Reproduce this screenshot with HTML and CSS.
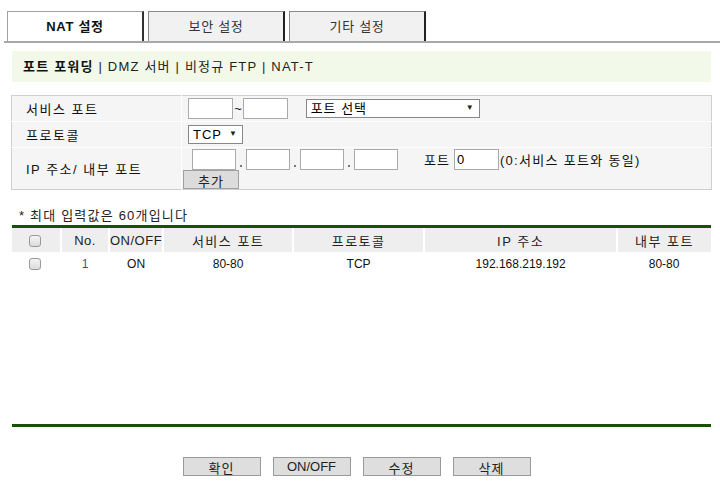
FILE: index.html
```html
<!DOCTYPE html>
<html lang="ko">
<head>
    <meta charset="UTF-8">
    <title>NAT 설정</title>
    <link rel="stylesheet" href="styles.css">
</head>
<body>
    <div class="tabs">
        <div class="tab active">NAT 설정</div>
        <div class="tab">보안 설정</div>
        <div class="tab">기타 설정</div>
    </div>

    <div class="subnav"><b>포트 포워딩</b> | DMZ 서버 | 비정규 FTP | NAT-T</div>

    <table class="form">
        <tr class="row-short">
            <th>서비스 포트</th>
            <td>
                <input type="text" class="port"><span class="tilde">~</span><input type="text" class="port">
                <span class="select wide"><select><option>포트 선택</option></select></span>
            </td>
        </tr>
        <tr class="row-short">
            <th>프로토콜</th>
            <td>
                <span class="select narrow"><select><option>TCP</option></select></span>
            </td>
        </tr>
        <tr class="row-tall">
            <th>IP 주소/ 내부 포트</th>
            <td class="ip-cell">
                <div class="ip-line">
                    <input type="text" class="ip"><span class="dot"></span><input type="text" class="ip"><span class="dot"></span><input type="text" class="ip"><span class="dot"></span><input type="text" class="ip">
                    <span class="port-label">포트</span><input type="text" class="port" value="0"><span class="hint">(0:서비스 포트와 동일)</span>
                </div>
                <button class="add-button">추가</button>
            </td>
        </tr>
    </table>

    <p class="note">* 최대 입력값은 60개입니다</p>

    <div class="list">
        <table class="rules">
            <tr class="head">
                <th class="c-check"><input type="checkbox"></th>
                <th class="c-no">No.</th>
                <th class="c-onoff">ON/OFF</th>
                <th class="c-svc">서비스 포트</th>
                <th class="c-proto">프로토콜</th>
                <th class="c-ip">IP 주소</th>
                <th class="c-inner">내부 포트</th>
            </tr>
            <tr>
                <td><input type="checkbox"></td>
                <td class="num">1</td>
                <td>ON</td>
                <td>80-80</td>
                <td>TCP</td>
                <td>192.168.219.192</td>
                <td>80-80</td>
            </tr>
        </table>
    </div>

    <div class="actions">
        <button>확인</button>
        <button class="latin">ON/OFF</button>
        <button>수정</button>
        <button>삭제</button>
    </div>
</body>
</html>
```

FILE: styles.css
```css
body {
    margin: 0;
    font-family: "Liberation Sans", "Noto Sans CJK KR", sans-serif;
    font-size: 13px;
    color: #111;
    background: #fff;
}

/* tabs */
.tabs {
    display: flex;
    gap: 4px;
    margin: 11px 0 0 4px;
    padding-left: 3px;
    border-bottom: 2px solid #a8a8a8;
}

.tab {
    width: 134px;
    height: 29px;
    line-height: 29px;
    text-align: center;
    font-size: 13px;
    letter-spacing: 0.7px;
    color: #333;
    background: #f1f1f1;
    border: 1px solid #8a8a8a;
    border-right: 2px solid #222;
    border-bottom: none;
}

.tab.active {
    background: #fff;
    color: #111;
    font-weight: bold;
    border-color: #a0a0a0;
    border-right-color: #333;
}

/* sub navigation */
.subnav {
    margin: 8px 9px 0 12px;
    height: 31px;
    line-height: 31px;
    padding-left: 11px;
    background: #f3f9e9;
    color: #222;
    letter-spacing: 1.2px;
}

.subnav b {
    color: #111;
}

/* input form */
.form {
    margin: 13px 0 0 11px;
    width: 701px;
    border-collapse: collapse;
    background: #f5f5f5;
    border: 1px solid #cfcfcf;
}

.form th {
    width: 154px;
    padding-left: 14px;
    text-align: left;
    font-weight: normal;
    letter-spacing: 1.5px;
    border-right: 1px solid #fff;
}

.form tr + tr th,
.form tr + tr td {
    border-top: 1px solid #fff;
}

.form td {
    padding: 0 0 0 6px;
}

.row-short {
    height: 26px;
}

.row-tall {
    height: 41px;
}

.form input[type="text"] {
    box-sizing: border-box;
    height: 21px;
    border: 1px solid #aaa;
    background: #fff;
    font: 13px "Liberation Sans", sans-serif;
    padding: 0 2px;
    vertical-align: middle;
}

.port {
    width: 45px;
}

.tilde {
    display: inline-block;
    width: 10px;
    text-align: center;
    vertical-align: middle;
}

.select {
    position: relative;
    display: inline-block;
    vertical-align: middle;
    box-sizing: border-box;
    height: 19px;
    border: 1px solid #888;
    background: #fff;
}

.select select {
    appearance: none;
    -webkit-appearance: none;
    border: none;
    background: transparent;
    font: 13px "Liberation Sans", "Noto Sans CJK KR", sans-serif;
    letter-spacing: 1px;
    height: 17px;
    width: 100%;
    padding: 0 0 0 4px;
    outline: none;
}

.select::after {
    content: "▼";
    position: absolute;
    right: 5px;
    top: 3px;
    font-size: 8px;
    color: #222;
    pointer-events: none;
}

.wide {
    width: 174px;
    margin-left: 14px;
}

.narrow {
    width: 55px;
}

.ip-cell {
    vertical-align: top;
    padding-top: 1px;
}

.ip-line {
    padding-left: 4px;
    height: 22px;
    display: flex;
    align-items: center;
}

.form input.ip {
    width: 44px;
}

.dot {
    width: 2px;
    height: 2px;
    margin: 14px 4px 0;
    background: #777;
}

.port-label {
    margin: 0 4px 0 26px;
    letter-spacing: 1px;
}

.hint {
    margin-left: 1px;
    letter-spacing: 1.3px;
}

.add-button {
    display: block;
    margin-left: -5px;
    width: 56px;
    height: 19px;
    padding: 0;
    font: 13px "Noto Sans CJK KR", sans-serif;
    letter-spacing: 1px;
    background: #dcdcdc;
    border: 1px solid #a0a0a0;
    color: #222;
}

.note {
    margin: 15px 0 0 19px;
    font-size: 13px;
    letter-spacing: 1.2px;
    color: #222;
}

/* list */
.list {
    margin: 1px 0 0 12px;
    width: 699px;
    height: 196px;
    border-top: 3px solid #145400;
    border-bottom: 3px solid #145400;
}

.rules {
    width: 100%;
    border-collapse: collapse;
    font-size: 12px;
}

.rules th {
    height: 24px;
    background: #eeeeee;
    font-weight: normal;
    font-size: 13px;
    letter-spacing: 1.5px;
    color: #222;
    border-left: 2px solid #fff;
    padding: 0;
}

.rules th.c-no,
.rules th.c-onoff {
    letter-spacing: 0.5px;
}

.rules th:first-child {
    border-left: none;
}

.rules td {
    height: 23px;
    text-align: center;
    padding: 0;
}

.c-check { width: 48px; }
.c-no { width: 46px; }
.c-onoff { width: 52px; }
.c-svc { width: 128px; }
.c-proto { width: 129px; }
.c-ip { width: 191px; }

.num {
    color: #1f5f9a;
}

.rules input[type="checkbox"] {
    appearance: none;
    -webkit-appearance: none;
    width: 12px;
    height: 12px;
    margin: 0 0 0 -3px;
    border: 1px solid #9a9a9a;
    border-radius: 3px;
    background: linear-gradient(#f4f4f4, #dcdcdc);
    vertical-align: middle;
}

/* buttons */
.actions {
    display: flex;
    justify-content: center;
    gap: 12px;
    margin: 30px 0 0 -7px;
}

.actions button {
    width: 78px;
    height: 19px;
    padding: 0;
    font: 13px "Liberation Sans", "Noto Sans CJK KR", sans-serif;
    letter-spacing: 1px;
    background: #dedede;
    border: 1px solid #9a9a9a;
    color: #222;
}

.actions button.latin {
    letter-spacing: 0;
}
```
